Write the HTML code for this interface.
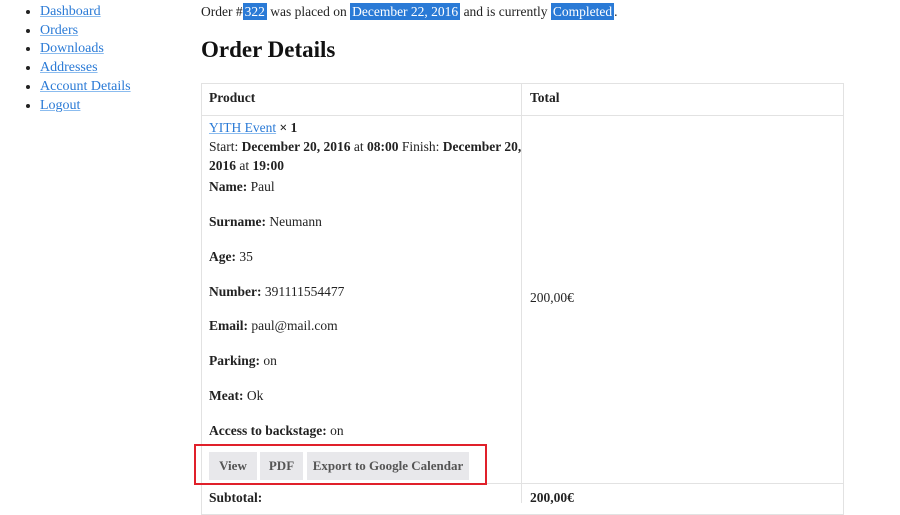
<!DOCTYPE html>
<html><head><style>
body{margin:0;width:900px;height:500px;overflow:hidden;background:#fff;font-family:"Liberation Serif",serif;font-size:13.5px;color:#222;position:relative}
.a{position:absolute;white-space:nowrap}
a{color:#2a7ad6;text-decoration:underline;text-decoration-color:#8bbcef}
ul{position:absolute;left:22px;top:3px;margin:0;padding-left:18px;line-height:18.7px;font-size:14px}
.hl{background:#2a7ad6;color:#fff;padding:1px 2px}
h1{position:absolute;left:201px;top:37px;margin:0;font-size:23px;font-weight:bold;color:#111}
.tb{position:absolute;left:201px;top:83px;width:641px;height:430px;border:1px solid #e2e2e2}
.vl{position:absolute;left:521px;top:83px;width:1px;height:420px;background:#e2e2e2}
.hl1{position:absolute;left:201px;width:642px;height:1px;background:#e2e2e2}
.btn{position:absolute;top:452px;height:28px;background:#e8e8eb;color:#555;font-weight:bold;font-size:13px;line-height:28px;text-align:center;white-space:nowrap}
</style></head><body>
<ul><li><a>Dashboard</a></li><li><a>Orders</a></li><li><a>Downloads</a></li><li><a>Addresses</a></li><li><a>Account Details</a></li><li><a>Logout</a></li></ul>
<div class="a" style="left:201px;top:4px">Order #<span class="hl">322</span> was placed on <span class="hl">December 22, 2016</span> and is currently <span class="hl">Completed</span>.</div>
<h1>Order Details</h1>
<div class="tb"></div><div class="vl"></div>
<div class="hl1" style="top:115px"></div><div class="hl1" style="top:483px"></div>
<div class="a" style="left:209px;top:90px;font-weight:bold">Product</div>
<div class="a" style="left:530px;top:90px;font-weight:bold">Total</div>
<div class="a" style="left:209px;top:120px"><a>YITH Event</a> <b>× 1</b></div>
<div class="a" style="left:209px;top:139px">Start: <b>December 20, 2016</b> at <b>08:00</b> Finish: <b>December 20,</b></div>
<div class="a" style="left:209px;top:158px"><b>2016</b> at <b>19:00</b></div>
<div class="a" style="left:209px;top:179px"><b>Name:</b> Paul</div>
<div class="a" style="left:209px;top:214px"><b>Surname:</b> Neumann</div>
<div class="a" style="left:209px;top:249px"><b>Age:</b> 35</div>
<div class="a" style="left:209px;top:284px"><b>Number:</b> 391111554477</div>
<div class="a" style="left:209px;top:318px"><b>Email:</b> paul@mail.com</div>
<div class="a" style="left:209px;top:353px"><b>Parking:</b> on</div>
<div class="a" style="left:209px;top:388px"><b>Meat:</b> Ok</div>
<div class="a" style="left:209px;top:423px"><b>Access to backstage:</b> on</div>
<div class="a" style="left:530px;top:290px">200,00€</div>
<div class="btn" style="left:209px;width:48px">View</div>
<div class="btn" style="left:260px;width:43px">PDF</div>
<div class="btn" style="left:307px;width:162px">Export to Google Calendar</div>
<div style="position:absolute;left:194px;top:444px;width:289px;height:37px;border:2px solid #e0202a"></div>
<div class="a" style="left:209px;top:490px;font-weight:bold">Subtotal:</div>
<div class="a" style="left:530px;top:490px;font-weight:bold">200,00€</div>
</body></html>
